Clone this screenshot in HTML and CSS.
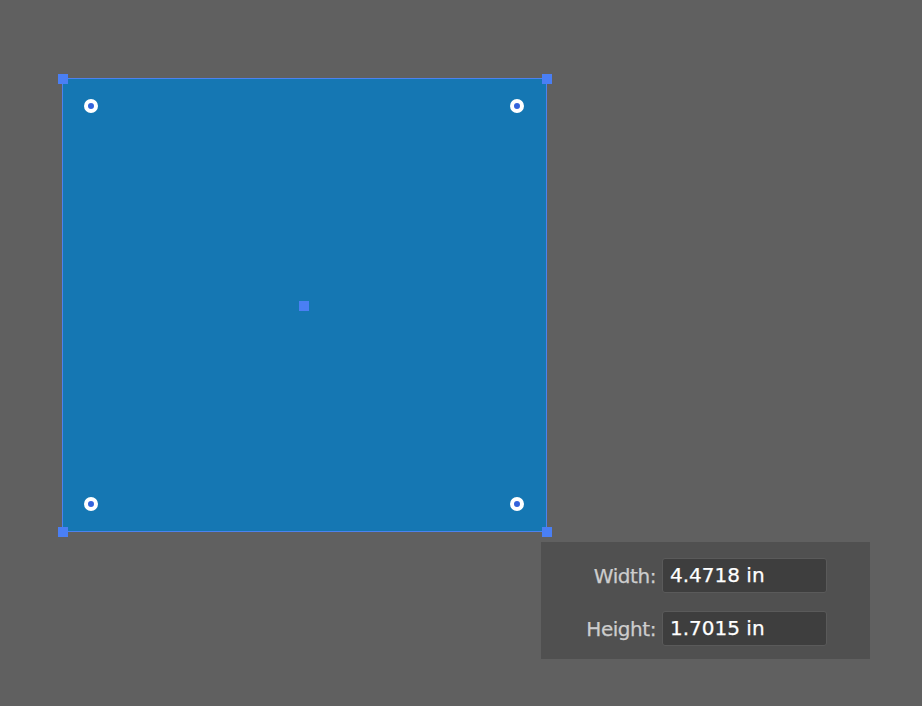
FILE: index.html
```html
<!DOCTYPE html>
<html>
<head>
<meta charset="utf-8">
<link rel="stylesheet" href="styles.css">
</head>
<body>
<div class="canvas">
  <div class="shape">
    <span class="handle h-tl"></span>
    <span class="handle h-tr"></span>
    <span class="handle h-bl"></span>
    <span class="handle h-br"></span>
    <span class="handle h-c"></span>
    <span class="radius r-tl"></span>
    <span class="radius r-tr"></span>
    <span class="radius r-bl"></span>
    <span class="radius r-br"></span>
  </div>
  <div class="hud">
    <div class="row">
      <span class="label">Width:</span>
      <span class="field">4.4718 in</span>
    </div>
    <div class="row">
      <span class="label">Height:</span>
      <span class="field">1.7015 in</span>
    </div>
  </div>
</div>
</body>
</html>
```
FILE: styles.css
```css
html, body {
  margin: 0;
  padding: 0;
  background: #606060;
}
.canvas {
  width: 922px;
  height: 706px;
  padding: 78px 0 0 62px;
  box-sizing: border-box;
  font-family: "DejaVu Sans", "Liberation Sans", sans-serif;
}
.shape {
  position: relative;
  width: 485px;
  height: 454px;
  box-sizing: border-box;
  background: #1577b3;
  border: 1.5px solid #4d82ef;
}
.handle {
  position: absolute;
  width: 10px;
  height: 10px;
  background: #4a7ff4;
}
.h-tl { left: -5.5px; top: -5.5px; }
.h-tr { right: -5.5px; top: -5.5px; }
.h-bl { left: -5.5px; bottom: -5.5px; }
.h-br { right: -5.5px; bottom: -5.5px; }
.h-c { left: 236px; top: 222px; }
.radius {
  position: absolute;
  width: 14px;
  height: 14px;
  box-sizing: border-box;
  border-radius: 50%;
  border: 4px solid #ffffff;
  background: #3463dc;
}
.r-tl { left: 21px; top: 20px; }
.r-tr { right: 22px; top: 20px; }
.r-bl { left: 21px; bottom: 20px; }
.r-br { right: 22px; bottom: 20px; }
.hud {
  margin: 10px 0 0 479px;
  width: 329px;
  height: 117px;
  background: #505050;
  box-sizing: border-box;
  padding: 16px 0 0 0;
  display: flex;
  flex-direction: column;
  gap: 18px;
}
.row {
  display: flex;
  align-items: center;
  height: 35px;
}
.label {
  width: 115px;
  text-align: right;
  color: #cdcdcd;
  font-size: 20px;
  letter-spacing: -0.45px;
  padding-right: 6px;
  -webkit-text-stroke: 0.25px #cdcdcd;
}
.field {
  width: 165px;
  height: 35px;
  box-sizing: border-box;
  background: #3e3e3e;
  border: 1px solid #5a5a5a;
  border-radius: 3px;
  color: #ffffff;
  font-size: 20px;
  line-height: 33px;
  padding-left: 7px;
  -webkit-text-stroke: 0.25px #ffffff;
}
```
